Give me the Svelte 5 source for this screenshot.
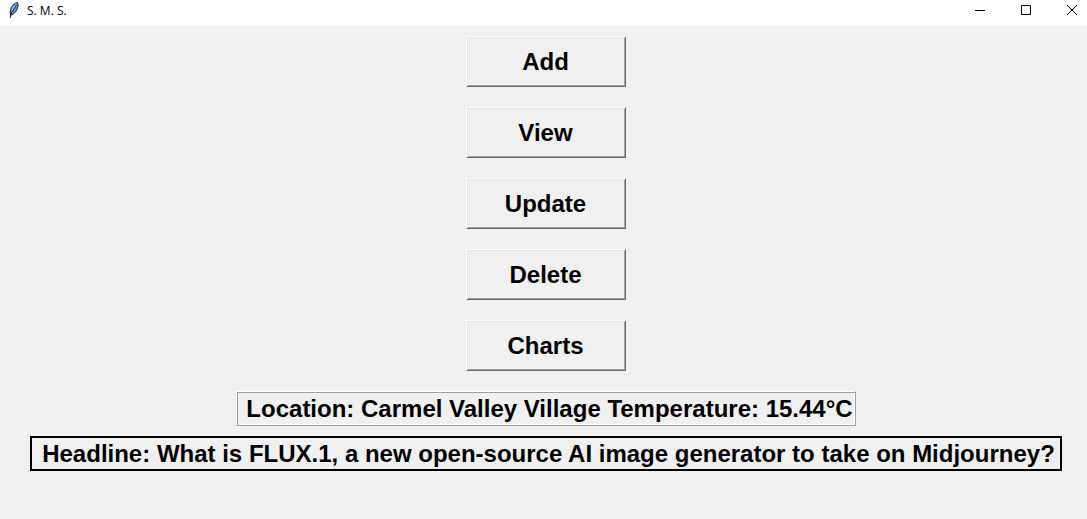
<script>
  const actions = ['Add', 'View', 'Update', 'Delete', 'Charts'];
  const place = 'Carmel Valley Village';
  const temperature = '15.44°C';
  const headline = 'What is FLUX.1, a new open-source AI image generator to take on Midjourney?';
</script>

<div class="window">
  <header class="titlebar">
    <svg class="feather" width="14" height="18" viewBox="0 0 14 18" aria-hidden="true">
      <path d="M10.500 1.500C8 2 5.500 4 4.300 6.500C3.200 9 3 11.500 3.500 13.800L5 14C7.500 12.500 9.600 10 10.500 7C11.200 5 11.300 3 10.500 1.500Z" fill="#5b9be6" stroke="#222" stroke-width="1" />
      <path d="M9.500 3C7.500 4 6 6 5.200 8L4.500 11L7 7Z" fill="#a9cdf5" />
      <path d="M9.500 4L6 9.500L3.500 14V17" fill="none" stroke="#222" stroke-width="1" />
    </svg>
    <span class="title">S. M. S.</span>
    <div class="controls">
      <button aria-label="Minimize">
        <svg width="12" height="12" viewBox="0 0 12 12"><path d="M1 6.500H11" /></svg>
      </button>
      <button aria-label="Maximize">
        <svg width="12" height="12" viewBox="0 0 12 12"><path d="M1.500 1.500H10.500V10.500H1.500Z" /></svg>
      </button>
      <button aria-label="Close">
        <svg width="12" height="12" viewBox="0 0 12 12"><path d="M1 1L11 11M11 1L1 11" /></svg>
      </button>
    </div>
  </header>

  <main>
    <nav>
      {#each actions as action}
        <button class="action">{action}</button>
      {/each}
    </nav>
    <p class="info ridge">Location: {place} Temperature: {temperature}</p>
    <p class="info solid">Headline: {headline}</p>
  </main>
</div>

<style>
  :global(body) {
    background: #f0f0f0;
  }

  .window {
    min-height: 100vh;
    display: flex;
    flex-direction: column;
    color: #000;
    background: #f0f0f0;
  }

  .titlebar {
    display: flex;
    align-items: center;
    height: 26px;
    padding-left: 7px;
    background: #fff;
  }

  .feather {
    margin-bottom: 6px;
  }

  .title {
    margin: 0 auto 4px 6px;
    font: 12px/16px "Open Sans", "Noto Sans", sans-serif;
  }

  .controls {
    display: flex;
    align-self: flex-start;
  }

  .controls button {
    display: flex;
    align-items: center;
    justify-content: flex-end;
    width: 46px;
    height: 20px;
    padding: 0 9px 0 0;
    border: 0;
    background: none;
  }

  .controls path {
    fill: none;
    stroke: #000;
    stroke-width: 1;
  }

  main {
    display: flex;
    flex-direction: column;
    align-items: center;
    gap: 10px;
    padding: 10px 0 10px 5px;
    font: bold 24px/27px "Liberation Sans", Arial, sans-serif;
  }

  nav {
    display: flex;
    flex-direction: column;
    gap: 20px;
    margin-bottom: 10px;
  }

  .action {
    width: 160px;
    height: 51px;
    padding: 0 1px 0 0;
    border: 1px solid;
    border-color: #fff #696969 #696969 #fff;
    box-shadow: inset 1px 1px #e3e3e3, inset -1px -1px #a0a0a0;
    background: #f0f0f0;
    color: inherit;
    font: inherit;
  }

  .info {
    box-sizing: border-box;
    margin: 0;
    white-space: nowrap;
  }

  .ridge {
    padding: 3px 2px 3px 9px;
    border: 1px solid;
    border-color: #fff #a0a0a0 #a0a0a0 #fff;
    box-shadow: inset 1px 1px #a0a0a0, inset -1px -1px #fff;
  }

  .solid {
    padding: 2px 5px 2px 10px;
    border: 2px solid #000;
  }
</style>
